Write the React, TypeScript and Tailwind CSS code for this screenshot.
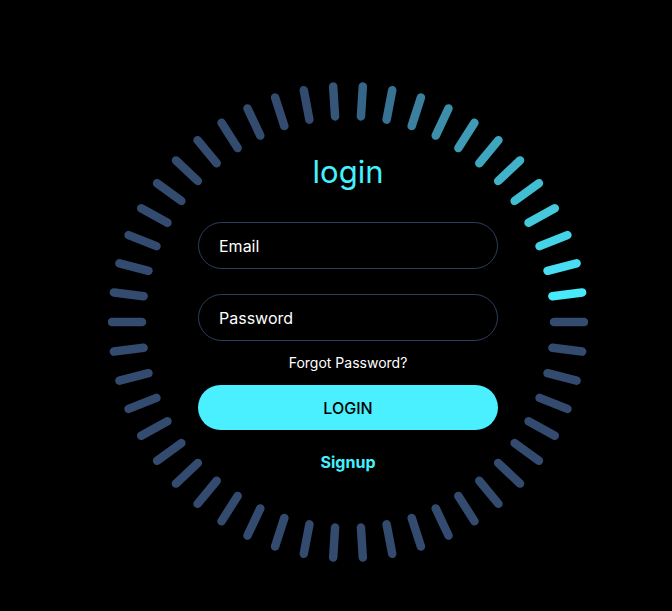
import React from "react";

const CX = 240;
const CY = 240;
const N = 50;

function mix(a: number[], b: number[], t: number) {
  const c = a.map((v, i) => Math.round(v + (b[i] - v) * t));
  return `rgb(${c[0]},${c[1]},${c[2]})`;
}

const DARK = [52, 75, 112];
const BRIGHT = [72, 234, 250];

function Ring() {
  const bars = [];
  for (let k = 0; k < N; k++) {
    const deg = k * 7.2;
    const rad = (deg * Math.PI) / 180;
    const x1 = CX + 206 * Math.cos(rad);
    const y1 = CY - 206 * Math.sin(rad);
    const x2 = CX + 236 * Math.cos(rad);
    const y2 = CY - 236 * Math.sin(rad);
    let t = 0;
    if (k >= 1 && k <= 13) {
      t = 1 - (k - 1) / 12.5;
      t = Math.max(0, t);
      t = Math.pow(t, 0.85);
    }
    bars.push(
      <line
        key={k}
        x1={x1}
        y1={y1}
        x2={x2}
        y2={y2}
        stroke={mix(DARK, BRIGHT, t)}
        strokeWidth={8.5}
        strokeLinecap="round"
      />
    );
  }
  return (
    <svg className="absolute inset-0" width={480} height={480} viewBox="0 0 480 480">
      {bars}
    </svg>
  );
}

export default function App() {
  return (
    <div
      className="w-[672px] h-[611px] bg-black overflow-hidden pl-[108px] pt-[82px]"
      style={{ fontFamily: "Inter, 'Noto Sans', sans-serif" }}
    >
      <div className="relative w-[480px] h-[480px]">
        <Ring />
        <div className="relative flex flex-col items-center">
          <h1 className="mt-[70px] text-[31px] leading-[40px] font-normal text-[#45f0ff]">login</h1>
          <input
            className="mt-[30px] w-[300px] h-[47px] rounded-full border border-[#2c3f5f] bg-transparent pl-5 text-[16px] text-white placeholder:text-white outline-none"
            placeholder="Email"
          />
          <input
            type="password"
            className="mt-[25px] w-[300px] h-[47px] rounded-full border border-[#2c3f5f] bg-transparent pl-5 text-[16px] text-white placeholder:text-white outline-none"
            placeholder="Password"
          />
          <a className="mt-[12px] text-[14px] leading-[20px] text-white">Forgot Password?</a>
          <button className="mt-[12px] w-[300px] h-[45px] rounded-full bg-[#4af0ff] text-[16px] font-medium text-black">
            LOGIN
          </button>
          <a className="mt-[20px] text-[16px] leading-[24px] font-bold text-[#45f0ff]">Signup</a>
        </div>
      </div>
    </div>
  );
}
